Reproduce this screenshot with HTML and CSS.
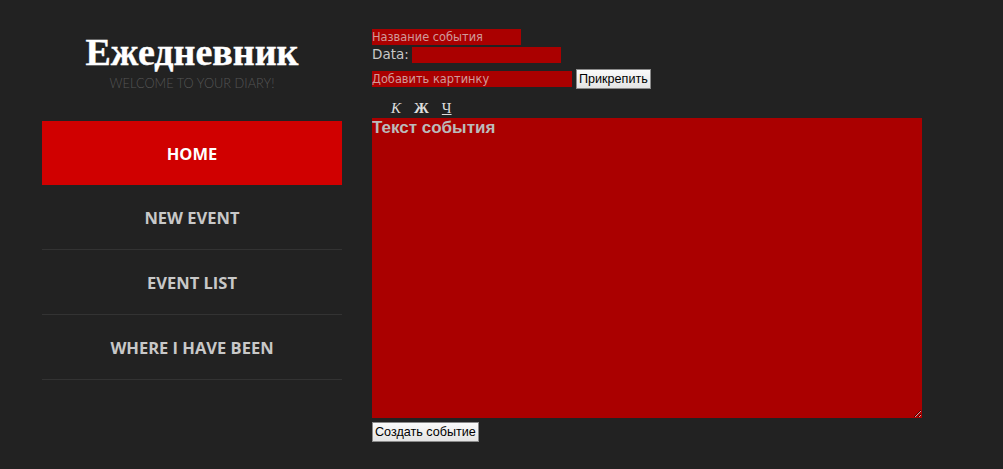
FILE: index.html
```html
<!DOCTYPE html>
<html lang="ru">
<head>
<meta charset="utf-8">
<title>Ежедневник</title>
<link rel="stylesheet" href="styles.css">
</head>
<body>
<div class="page">
  <aside class="sidebar">
    <header class="brand">
      <h1 class="brand-title">Ежедневник</h1>
      <p class="brand-sub">WELCOME TO YOUR DIARY!</p>
    </header>
    <nav class="nav">
      <a class="nav-item active" href="#">HOME</a>
      <a class="nav-item" href="#">NEW EVENT</a>
      <a class="nav-item" href="#">EVENT LIST</a>
      <a class="nav-item" href="#">WHERE I HAVE BEEN</a>
    </nav>
  </aside>
  <main class="main">
    <form class="event-form">
      <div class="row"><input class="field field-title" type="text" placeholder="Название события"></div>
      <div class="row"><label class="label">Data:</label><input class="field field-date" type="text"></div>
      <div class="row row-file"><input class="field field-file" type="text" placeholder="Добавить картинку"><button class="btn" type="button">Прикрепить</button></div>
      <div class="toolbar">
        <span class="tool tool-i">К</span>
        <span class="tool tool-b">Ж</span>
        <span class="tool tool-u">Ч</span>
      </div>
      <textarea class="text" placeholder="Текст события"></textarea>
      <div class="row row-submit"><button class="btn" type="button">Создать событие</button></div>
    </form>
  </main>
</div>
</body>
</html>
```
FILE: styles.css
```css
* { box-sizing: border-box; }
html, body { margin: 0; padding: 0; }
body {
  background: #222222;
  font-family: "Liberation Sans", Arial, sans-serif;
  width: 1003px;
  height: 469px;
  overflow: hidden;
}
.page {
  display: flex;
  gap: 30px;
  padding-left: 42px;
}
.sidebar {
  width: 300px;
  flex: none;
}
.brand {
  text-align: center;
  padding-top: 32px;
  height: 121px;
}
.brand-title {
  margin: 0;
  font-family: "Liberation Serif", "Times New Roman", serif;
  font-weight: bold;
  font-size: 38px;
  line-height: 40px;
  color: #ffffff;
  -webkit-text-stroke: 0.4px #ffffff;
}
.brand-sub {
  margin: 4px 0 0;
  font-family: Lato, sans-serif;
  font-weight: 300;
  font-size: 12.8px;
  line-height: 14px;
  color: #555555;
}
.nav {
  display: flex;
  flex-direction: column;
}
.nav-item {
  display: flex;
  align-items: center;
  justify-content: center;
  height: 65px;
  border-bottom: 1px solid #333333;
  font-family: "Open Sans", sans-serif;
  font-weight: 700;
  font-size: 16.5px;
  color: #c8c8c8;
  text-decoration: none;
}
.nav-item.active {
  background: #d00000;
  color: #ffffff;
  height: 64px;
  border-bottom: none;
}
.main {
  padding-top: 29px;
}
.event-form {
  display: flex;
  flex-direction: column;
  align-items: flex-start;
}
.row {
  display: flex;
  align-items: center;
}
.field {
  border: none;
  outline: none;
  background: #aa0000;
  height: 16px;
  padding: 0;
  font-family: "DejaVu Sans", sans-serif;
  font-size: 11.4px;
  color: #ffffff;
}
.field::placeholder { color: #d09a9a; }
.field-title { width: 149px; }
.label {
  font-family: "DejaVu Sans", sans-serif;
  font-size: 13.5px;
  color: #c8c8c8;
  margin-right: 3px;
  line-height: 19px;
}
.field-date { width: 149px; }
.row-file { margin-top: 5px; gap: 4px; }
.field-file { width: 200px; }
.btn {
  font-family: "Liberation Sans", Arial, sans-serif;
  font-size: 12.6px;
  color: #000000;
  background: linear-gradient(#fafafa, #e4e4e4);
  border: 1px solid #8a8a8a;
  border-radius: 0;
  padding: 0 2px;
  height: 20px;
  line-height: 17px;
}
.toolbar {
  display: flex;
  gap: 13px;
  padding-left: 19px;
  margin-top: 11px;
  height: 18px;
  font-family: "Liberation Serif", serif;
  font-size: 15px;
  color: #dddddd;
  line-height: 16px;
}
.tool-i { font-style: italic; }
.tool-b { font-weight: bold; }
.tool-u { text-decoration: underline; }
.text {
  width: 550px;
  height: 300px;
  margin: 0;
  border: none;
  outline: none;
  background: #aa0000;
  padding: 0;
  font-family: "Liberation Sans", Arial, sans-serif;
  font-weight: bold;
  font-size: 17px;
  color: #ffffff;
  resize: both;
}
.text::placeholder { color: #bbbbbb; }
.row-submit { margin-top: 4px; }
```
